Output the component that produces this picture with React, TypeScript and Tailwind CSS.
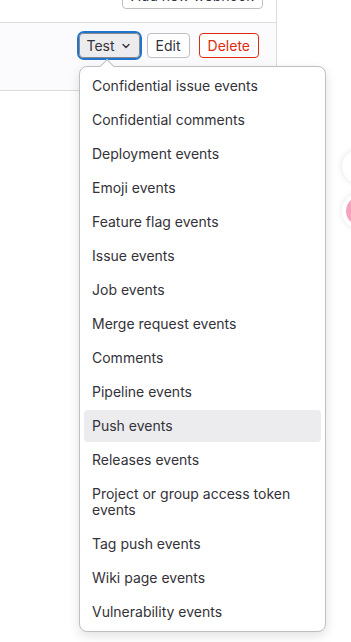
import React from 'react';

const events = [
  'Confidential issue events',
  'Confidential comments',
  'Deployment events',
  'Emoji events',
  'Feature flag events',
  'Issue events',
  'Job events',
  'Merge request events',
  'Comments',
  'Pipeline events',
  'Push events',
  'Releases events',
  'Project or group access token events',
  'Tag push events',
  'Wiki page events',
  'Vulnerability events',
];

export default function App() {
  return (
    <div className="relative h-[642px] w-[351px] overflow-hidden bg-white text-[#333238]" style={{ fontFamily: 'Inter, "Noto Sans", sans-serif' }}>
      {/* Webhook list panel */}
      <div className="w-[277px] border-r border-[#dcdcde]">
        <div className="flex h-[22px] items-start justify-end pr-[13px]">
          <button className="-mt-[17px] h-[26px] rounded-[4px] border border-[#bfbfc3] bg-white px-[8px] text-sm leading-none text-[#333238]">
            Add new webhook
          </button>
        </div>
        <div className="flex h-[69px] items-start justify-end gap-[7px] border-y border-[#dcdcde] bg-[#fbfafd] pr-[17px] pt-[10px]">
          <div className="rounded-[5px] ring-2 ring-[#1f75cb]">
            <button className="flex h-[25px] items-center gap-[5px] rounded-[4px] border border-[#89888d] bg-[#ececef] pl-[7px] pr-[7px] text-sm">
              Test
              <svg width="12" height="12" viewBox="0 0 16 16" fill="none" stroke="#333238" strokeWidth="1.8" strokeLinecap="round" strokeLinejoin="round">
                <path d="M4 6l4 4 4-4" />
              </svg>
            </button>
          </div>
          <button className="h-[25px] rounded-[4px] border border-[#bfbfc3] bg-white px-[8px] text-sm">Edit</button>
          <button className="ml-[2px] h-[25px] rounded-[4px] border border-[#dd2b0e] bg-white px-[8px] text-sm text-[#dd2b0e]">
            Delete
          </button>
        </div>
      </div>

      {/* Floating circles on the right edge */}
      <div className="absolute left-[342px] top-[150px] flex flex-col gap-[10px]">
        <div className="h-[33px] w-[33px] rounded-full bg-white shadow-[0_0_6px_rgba(0,0,0,0.12)]" />
        <div className="flex h-[36px] w-[36px] items-center justify-center rounded-full bg-white shadow-[0_0_6px_rgba(0,0,0,0.1)]">
          <div className="ml-[2px] h-[30px] w-[30px] rounded-full bg-[#f5a3c0]" />
        </div>
      </div>

      {/* Dropdown */}
      <div className="absolute left-[79px] top-[66px] w-[247px] rounded-[8px] border border-[#bfbfc3] bg-white px-[4px] py-[3px] shadow-[0_4px_12px_rgba(5,5,6,0.12)]">
        <div className="absolute -top-[6px] left-[22px] h-[10px] w-[10px] rotate-45 border-l border-t border-[#bfbfc3] bg-white" />
        <ul className="relative flex flex-col gap-[2px]">
          {events.map((e) => (
            <li
              key={e}
              className={`rounded-[4px] px-[8px] py-[8px] text-sm leading-[16px] ${e === 'Push events' ? 'bg-[#ececef]' : ''}`}
            >
              {e}
            </li>
          ))}
        </ul>
      </div>
    </div>
  );
}
